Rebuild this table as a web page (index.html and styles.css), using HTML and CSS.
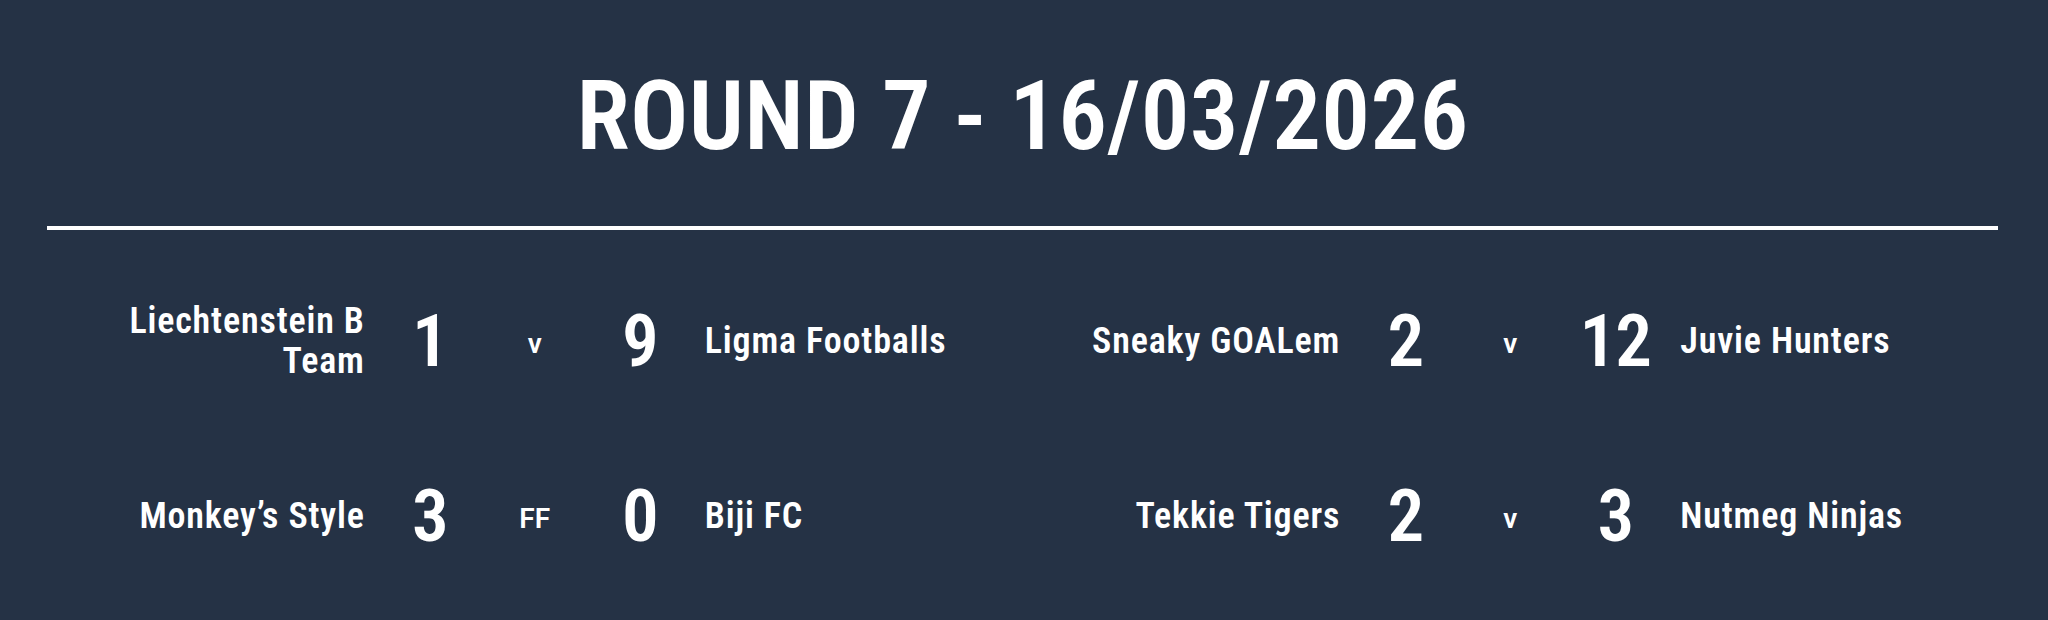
FILE: index.html
```html
<!DOCTYPE html>
<html lang="en">
<head>
<meta charset="utf-8">
<title>Round 7 - 16/03/2026</title>
<link rel="stylesheet" href="styles.css">
</head>
<body>
<main class="page">
  <h1 class="title">ROUND 7 - 16/03/2026</h1>
  <hr class="rule">
  <section class="fixtures">
    <div class="match">
      <div class="team home">Liechtenstein B<br>Team</div>
      <div class="score">1</div>
      <div class="sep">v</div>
      <div class="score">9</div>
      <div class="team away">Ligma Footballs</div>
    </div>
    <div class="match">
      <div class="team home">Sneaky GOALem</div>
      <div class="score">2</div>
      <div class="sep">v</div>
      <div class="score">12</div>
      <div class="team away">Juvie Hunters</div>
    </div>
    <div class="match">
      <div class="team home">Monkey’s Style</div>
      <div class="score">3</div>
      <div class="sep">FF</div>
      <div class="score">0</div>
      <div class="team away">Biji FC</div>
    </div>
    <div class="match">
      <div class="team home">Tekkie Tigers</div>
      <div class="score">2</div>
      <div class="sep">v</div>
      <div class="score">3</div>
      <div class="team away">Nutmeg Ninjas</div>
    </div>
  </section>
</main>
</body>
</html>
```
FILE: styles.css
```css
* {
  box-sizing: border-box;
}

html, body {
  margin: 0;
  padding: 0;
  background: #253245;
}

body {
  width: 2048px;
  height: 620px;
  overflow: hidden;
  color: #ffffff;
  font-family: Roboto, "Liberation Sans", sans-serif;
}

.page {
  padding: 68px 50px 0 47px;
}

.title {
  margin: 0 0 61px;
  font-size: 97px;
  line-height: 97px;
  font-weight: 600;
  font-stretch: 87%;
  letter-spacing: 0.3px;
  text-align: center;
}

.rule {
  margin: 0;
  border: 0;
  height: 4px;
  background: #ffffff;
}

.fixtures {
  margin-top: 51px;
  display: grid;
  grid-template-columns: 1fr 1fr;
  row-gap: 55px;
}

.match {
  height: 120px;
  display: grid;
  grid-template-columns: 1fr 80px 80px 80px 1fr;
  column-gap: 25px;
  align-items: center;
}

.team {
  font-size: 36px;
  line-height: 40px;
  font-weight: 600;
  font-stretch: 87%;
  letter-spacing: 0.85px;
}

.home {
  text-align: right;
}

.away {
  text-align: left;
}

.score {
  font-size: 73px;
  line-height: 73px;
  font-weight: 600;
  font-stretch: 85%;
  text-align: center;
  letter-spacing: -1px;
}

.sep {
  font-size: 28px;
  line-height: 28px;
  font-weight: 600;
  text-align: center;
  padding-top: 6px;
}
```
